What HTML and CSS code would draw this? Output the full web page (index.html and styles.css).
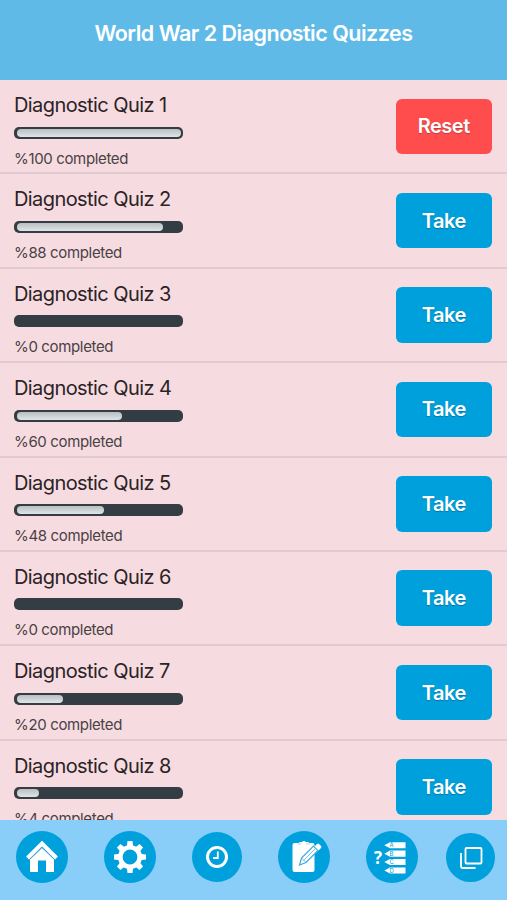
FILE: index.html
```
<!DOCTYPE html>
<html lang="en">
<head>
    <meta charset="UTF-8">
    <title>World War 2 Diagnostic Quizzes</title>
    <meta name="viewport" content="width=device-width, initial-scale=1.0">
    <link rel="stylesheet" href="styles.css">
</head>
<body>
    <header class="header">
        <h1>World War 2 Diagnostic Quizzes</h1>
    </header>

    <main class="quiz-list">
        <div class="quiz">
            <div class="quiz-info">
                <h2>Diagnostic Quiz 1</h2>
                <div class="progress"><div class="progress-fill" style="--done: 1"></div></div>
                <p>%100 completed</p>
            </div>
            <button class="btn btn-reset">Reset</button>
        </div>
        <div class="quiz">
            <div class="quiz-info">
                <h2>Diagnostic Quiz 2</h2>
                <div class="progress"><div class="progress-fill" style="--done: 0.88"></div></div>
                <p>%88 completed</p>
            </div>
            <button class="btn">Take</button>
        </div>
        <div class="quiz">
            <div class="quiz-info">
                <h2>Diagnostic Quiz 3</h2>
                <div class="progress"></div>
                <p>%0 completed</p>
            </div>
            <button class="btn">Take</button>
        </div>
        <div class="quiz">
            <div class="quiz-info">
                <h2>Diagnostic Quiz 4</h2>
                <div class="progress"><div class="progress-fill" style="--done: 0.6"></div></div>
                <p>%60 completed</p>
            </div>
            <button class="btn">Take</button>
        </div>
        <div class="quiz">
            <div class="quiz-info">
                <h2>Diagnostic Quiz 5</h2>
                <div class="progress"><div class="progress-fill" style="--done: 0.48"></div></div>
                <p>%48 completed</p>
            </div>
            <button class="btn">Take</button>
        </div>
        <div class="quiz">
            <div class="quiz-info">
                <h2>Diagnostic Quiz 6</h2>
                <div class="progress"></div>
                <p>%0 completed</p>
            </div>
            <button class="btn">Take</button>
        </div>
        <div class="quiz">
            <div class="quiz-info">
                <h2>Diagnostic Quiz 7</h2>
                <div class="progress"><div class="progress-fill" style="--done: 0.2"></div></div>
                <p>%20 completed</p>
            </div>
            <button class="btn">Take</button>
        </div>
        <div class="quiz">
            <div class="quiz-info">
                <h2>Diagnostic Quiz 8</h2>
                <div class="progress"><div class="progress-fill" style="--done: 0.04"></div></div>
                <p>%4 completed</p>
            </div>
            <button class="btn">Take</button>
        </div>
    </main>

    <nav class="tabbar">
        <a class="tab" aria-label="Home">
            <svg viewBox="0 0 52 52">
                <path d="M11.5 27 26 12.5 40.5 27" fill="none" stroke="#fff" stroke-width="4"/>
                <path d="M14 28.5 26 17 38 28.5V41H30V29.5H22V41H14Z" fill="#fff"/>
                <path d="M13.5 28.5 26 16.2 38.5 28.5" fill="none" stroke="#4aa5dc" stroke-width="1"/>
            </svg>
        </a>
        <a class="tab" aria-label="Settings">
            <svg viewBox="0 0 52 52">
                <circle cx="26" cy="26" r="9.7" fill="none" stroke="#fff" stroke-width="4.6"/>
                <g fill="#fff">
                    <path id="tooth" d="M22.8 16 23.5 10H28.5L29.2 16Z"/>
                    <use href="#tooth" transform="rotate(45 26 26)"/>
                    <use href="#tooth" transform="rotate(90 26 26)"/>
                    <use href="#tooth" transform="rotate(135 26 26)"/>
                    <use href="#tooth" transform="rotate(180 26 26)"/>
                    <use href="#tooth" transform="rotate(225 26 26)"/>
                    <use href="#tooth" transform="rotate(270 26 26)"/>
                    <use href="#tooth" transform="rotate(315 26 26)"/>
                </g>
            </svg>
        </a>
        <a class="tab tab-clock" aria-label="History">
            <svg viewBox="0 0 50 50">
                <circle cx="25" cy="25" r="9.5" fill="none" stroke="#fff" stroke-width="3"/>
                <path d="M25.8 19.5V26H21" fill="none" stroke="#fff" stroke-width="1.8"/>
            </svg>
        </a>
        <a class="tab" aria-label="Tests">
            <svg viewBox="0 0 52 52">
                <path d="M16.5 12H20.5Q21.5 10.5 24 11Q26 9 28 11Q30.500 10.500 31.500 12H34.500Q36.500 12 36.500 14V39Q36.500 41 34.500 41H16.500Q14.500 41 14.500 39V14Q14.500 12 16.500 12Z" fill="#fff"/>
                <path d="M19.500 13H23M28 13H32" stroke="#a5d8f0" stroke-width="1"/>
                <path d="M21.500 34 23.500 27 35.500 15 40 19.500 28 31.500Z" fill="#fff" stroke="#3aaadd" stroke-width="1.2"/>
                <path d="M23.500 27 28 31.500M25.500 29.500 37.500 17.500" fill="none" stroke="#3aaadd" stroke-width="0.7"/>
                <path d="M36.500 15.500 39 13Q40 12 41 13L43 15Q44 16 43 17L40.500 19.500Z" fill="#fff"/>
            </svg>
        </a>
        <a class="tab" aria-label="Questions">
            <svg viewBox="0 0 52 52">
                <text x="8" y="32.500" class="icon-question">?</text>
                <g fill="#fff">
                    <path d="M18.300 14.300 24 11.200H39.500V17.300H24Z"/>
                    <path d="M18.300 22.700 24 19.600H39.500V25.700H24Z"/>
                    <path d="M18.300 31.100 24 28H39.500V34.100H24Z"/>
                    <path d="M18.300 39.500 24 36.400H39.500V42.500H24Z"/>
                </g>
                <g class="icon-option">
                    <text x="23.500" y="16.300">A</text>
                    <text x="23.500" y="24.700">B</text>
                    <text x="23.500" y="33.100">C</text>
                    <text x="23.500" y="41.500">D</text>
                </g>
            </svg>
        </a>
        <a class="tab tab-cards" aria-label="Cards">
            <svg viewBox="0 0 49 49" fill="none" stroke="#fff" stroke-width="1.8">
                <rect x="19.500" y="15" width="16" height="15.500" rx="1"/>
                <path d="M15 20V33.500Q15 35 16.500 35H29.500"/>
            </svg>
        </a>
    </nav>
</body>
</html>
```
FILE: styles.css
```
:root {
    --header: #60bae8;
    --tabbar: #89cdf9;
    --primary: #00a0dc;
    --danger: #ff4d4d;
    --page: #f6dce0;
    --line: #e2cbd0;
    --track: #343d44;
}

* {
    margin: 0;
    padding: 0;
    box-sizing: border-box;
    font-family: Inter, Roboto, sans-serif;
}

body {
    height: 100vh;
    display: flex;
    flex-direction: column;
    overflow: hidden;
    background: var(--page);
}

.header {
    flex: none;
    height: 80px;
    padding-top: 20px;
    background: var(--header);
    color: white;
    text-align: center;
}

h1 {
    font-size: 21.5px;
    font-weight: 600;
    line-height: 26px;
    letter-spacing: -0.5px;
}

.quiz-list {
    flex: 1;
    min-height: 0;
    overflow: hidden;
}

.quiz {
    display: flex;
    justify-content: space-between;
    height: 94.4px;
    padding: 13px 15.5px 0 14px;
    border-bottom: 2px solid var(--line);
}

h2 {
    font-size: 20px;
    font-weight: 400;
    line-height: 24px;
    color: #2b2326;
    letter-spacing: -0.58px;
}

.progress {
    width: 169px;
    height: 12px;
    margin-top: 9.5px;
    padding: 2px 2.5px;
    border-radius: 5px;
    background: var(--track);
}

.progress-fill {
    width: calc(16.5px + 148px * var(--done));
    height: 8px;
    border-radius: 4px;
    background: linear-gradient(#b9bfc1, #dfe4e6);
}

.quiz-info p {
    margin-top: 10px;
    font-size: 15px;
    line-height: 20px;
    color: #4a4145;
    letter-spacing: -0.35px;
}

.btn {
    width: 95.5px;
    height: 55.5px;
    margin-top: 5.5px;
    border: none;
    border-radius: 6px;
    background: var(--primary);
    color: white;
    font-size: 20px;
    font-weight: 600;
    letter-spacing: -0.5px;
    text-shadow: 0 1px 1px rgba(0, 0, 0, 0.25);
}

.btn-reset {
    background: var(--danger);
}

.tabbar {
    flex: none;
    display: flex;
    align-items: center;
    gap: 36px;
    height: 80.5px;
    padding: 0 12px 5px 16px;
    background: var(--tabbar);
}

.tab {
    flex: none;
    width: 52px;
    height: 52px;
    border-radius: 50%;
    background: var(--primary);
}

.tab svg {
    display: block;
    width: 100%;
    height: 100%;
}

.tab-clock {
    width: 50px;
    height: 50px;
}

.tab-cards {
    width: 49px;
    height: 49px;
    margin-left: -8px;
}

.icon-question {
    fill: white;
    font-family: "Open Sans", sans-serif;
    font-size: 17px;
    font-weight: 700;
}

.icon-option {
    fill: var(--primary);
    font-size: 6px;
}
```
